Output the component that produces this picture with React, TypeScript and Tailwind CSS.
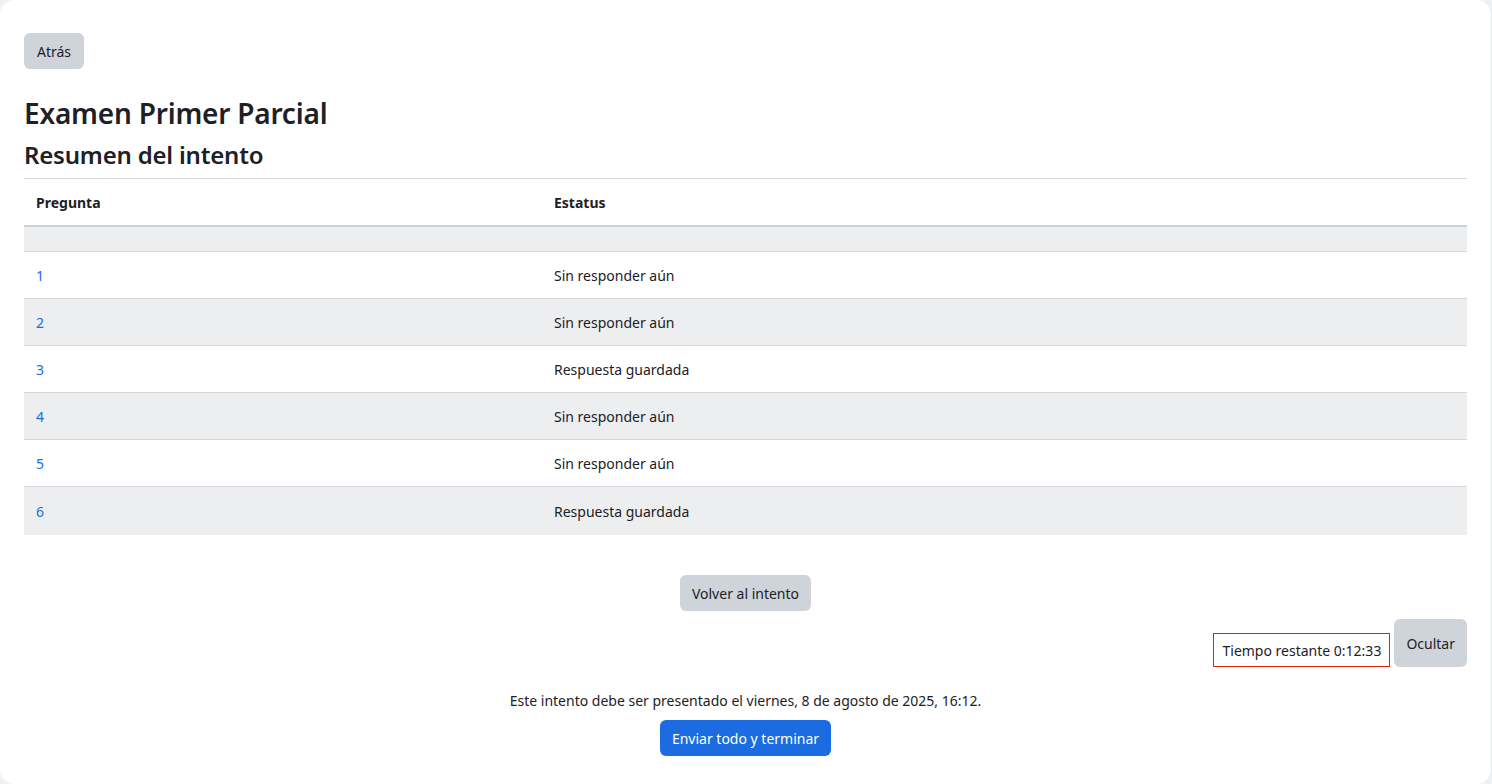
import React from "react";

const rows = [
  { n: "1", s: "Sin responder aún" },
  { n: "2", s: "Sin responder aún" },
  { n: "3", s: "Respuesta guardada" },
  { n: "4", s: "Sin responder aún" },
  { n: "5", s: "Sin responder aún" },
  { n: "6", s: "Respuesta guardada" },
];

export default function App() {
  return (
    <div className="h-[784px] w-full bg-[#eef0f3] overflow-hidden" style={{ fontFamily: '"Noto Sans", "Open Sans", sans-serif' }}>
      <div className="h-[784px] bg-white rounded-[14px] border-r border-[#e3e6ea] px-6 pt-[33px] text-[#1d2125]">
        <button className="h-9 px-[13px] rounded-md bg-[#ced4da] text-[14px] text-[#1d2125]">Atrás</button>
        <h2 className="mt-[25px] text-[28px] leading-[38px] font-semibold tracking-[-0.2px]">Examen Primer Parcial</h2>
        <h3 className="mt-[7px] text-[24px] leading-[32px] font-semibold tracking-[-0.2px]">Resumen del intento</h3>
        <div className="mt-[7px] border-t border-[#d4d8dd]">
          <div className="grid grid-cols-[518px_1fr] h-[48px] items-center border-b-2 border-[#cdd2d9] text-[14px] font-bold">
            <div className="px-3">Pregunta</div>
            <div className="px-3">Estatus</div>
          </div>
          <div className="h-[25px] bg-[#eceef0] border-b border-[#d4d8dd]"></div>
          {rows.map((r, i) => (
            <div
              key={r.n}
              className={`grid grid-cols-[518px_1fr] items-center text-[14px] ${i % 2 === 1 ? "bg-[#eceef0]" : "bg-white"} ${i < rows.length - 1 ? "h-[47px] border-b border-[#d4d8dd]" : "h-[48px]"}`}
            >
              <div className="px-3 text-[#1a6ce0]">{r.n}</div>
              <div className="px-3">{r.s}</div>
            </div>
          ))}
        </div>
        <div className="mt-[40px] flex justify-center">
          <button className="h-9 px-3 rounded-md bg-[#ced4da] text-[14px] text-[#1d2125]">Volver al intento</button>
        </div>
        <div className="mt-2 flex justify-end items-end gap-1">
          <div className="h-[34px] px-2 border border-[#e0220f] flex items-center text-[14px]">Tiempo restante 0:12:33</div>
          <button className="h-12 px-3 rounded-md bg-[#ced4da] text-[14px] text-[#1d2125]">Ocultar</button>
        </div>
        <p className="mt-[23px] text-center text-[14px] leading-[22px]">Este intento debe ser presentado el viernes, 8 de agosto de 2025, 16:12.</p>
        <div className="mt-[8px] flex justify-center">
          <button className="h-9 px-3 rounded-md bg-[#1a6ce0] text-white text-[14px]">Enviar todo y terminar</button>
        </div>
      </div>
    </div>
  );
}
